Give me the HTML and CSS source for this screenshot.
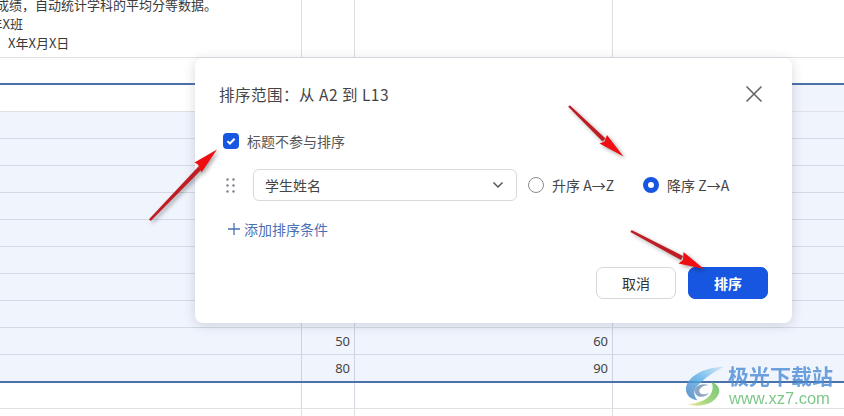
FILE: index.html
```html
<!DOCTYPE html>
<html lang="zh-CN">
<head>
<meta charset="utf-8">
<title>排序</title>
<link rel="stylesheet" href="styles.css">
</head>
<body>
<div class="sheet">
  <div class="row row-intro">
    <div class="cell cell-intro">
      <p class="intro-line intro-a">用于录入学生成绩，自动统计学科的平均分等数据。</p>
      <p class="intro-line intro-b">X年X班</p>
      <p class="intro-line intro-c">时间：X年X月X日</p>
    </div>
    <div class="cell"></div><div class="cell"></div><div class="cell"></div>
  </div>
  <div class="row row-gap"><div class="cell wide"></div></div>
  <div class="row row-head"><div class="cell wide"></div><div class="cell tint-end"></div></div>
  <div class="row band"><div class="cell"></div><div class="cell"></div><div class="cell"></div><div class="cell"></div></div>
  <div class="row band"><div class="cell"></div><div class="cell"></div><div class="cell"></div><div class="cell"></div></div>
  <div class="row band"><div class="cell"></div><div class="cell"></div><div class="cell"></div><div class="cell"></div></div>
  <div class="row band"><div class="cell"></div><div class="cell"></div><div class="cell"></div><div class="cell"></div></div>
  <div class="row band"><div class="cell"></div><div class="cell"></div><div class="cell"></div><div class="cell"></div></div>
  <div class="row band"><div class="cell"></div><div class="cell"></div><div class="cell"></div><div class="cell"></div></div>
  <div class="row band"><div class="cell"></div><div class="cell"></div><div class="cell"></div><div class="cell"></div></div>
  <div class="row band"><div class="cell"></div><div class="cell"></div><div class="cell"></div><div class="cell"></div></div>
  <div class="row band"><div class="cell"></div><div class="cell num">50</div><div class="cell num">60</div><div class="cell"></div></div>
  <div class="row band band-last"><div class="cell"></div><div class="cell num">80</div><div class="cell num">90</div><div class="cell"></div></div>
  <div class="row row-foot"><div class="cell"></div><div class="cell"></div><div class="cell"></div><div class="cell"></div></div>
  <div class="row"><div class="cell"></div><div class="cell"></div><div class="cell"></div><div class="cell"></div></div>
</div>

<section class="dialog">
  <header class="dialog-head">
    <h2 class="dialog-title">排序范围：从 A2 到 L13</h2>
    <svg class="close" width="18" height="18" viewBox="0 0 18 18"><path d="M1.500 1.500l15 15M16.500 1.500l-15 15"/></svg>
  </header>
  <label class="check-row">
    <span class="checkbox"><svg width="16" height="16" viewBox="0 0 16 16"><path d="M4.400 8.100l2.500 2.400 4.700-4.800"/></svg></span>
    <span>标题不参与排序</span>
  </label>
  <div class="rule">
    <svg class="grip" width="9" height="15" viewBox="0 0 9 15"><g><circle cx="1.500" cy="1.500" r="1.200"/><circle cx="7.500" cy="1.500" r="1.200"/><circle cx="1.500" cy="7.500" r="1.200"/><circle cx="7.500" cy="7.500" r="1.200"/><circle cx="1.500" cy="13.500" r="1.200"/><circle cx="7.500" cy="13.500" r="1.200"/></g></svg>
    <div class="select">
      <span>学生姓名</span>
      <svg width="12" height="8" viewBox="0 0 12 8"><path d="M1.500 1.500L6 6l4.500-4.500"/></svg>
    </div>
    <div class="radio-item"><span class="radio"></span><span>升序 A→Z</span></div>
    <div class="radio-item"><span class="radio on"></span><span>降序 Z→A</span></div>
  </div>
  <div class="add">
    <svg width="12" height="12" viewBox="0 0 12 12"><path d="M6 0v12M0 6h12"/></svg>
    <span>添加排序条件</span>
  </div>
  <footer class="actions">
    <button class="btn">取消</button>
    <button class="btn primary">排序</button>
  </footer>
</section>

<svg class="arrows" width="844" height="416" viewBox="0 0 844 416">
  <g class="arrow">
    <path class="shaft" d="M149 219.200L198.400 166.500l3.200 3L150.800 221z"/>
    <path class="head" d="M217 149.500L194.500 162.500l3.500 2 3.500 8z"/>
  </g>
  <g class="arrow">
    <path class="shaft" d="M569.800 105.200L605.500 138.500l-3 3L568.200 106.800z"/>
    <path class="head" d="M623.500 156.500L599.500 143.500l5-2 2.500-6.500z"/>
  </g>
  <g class="arrow">
    <path class="shaft" d="M631.600 230L683 256l-2 4L630.400 232z"/>
    <path class="head" d="M704 269L678.500 263.500l4.500-3.500 .5-8z"/>
  </g>
</svg>

<div class="mark">
  <svg class="mark-logo" width="44" height="44" viewBox="0 0 46 44">
    <defs>
      <linearGradient id="gr" x1="1" y1="0" x2="0" y2="1"><stop offset="0" stop-color="#58b85a"/><stop offset=".6" stop-color="#8ccc62"/><stop offset="1" stop-color="#f0e27a"/></linearGradient>
      <linearGradient id="bl" x1="1" y1="0" x2="0" y2="1"><stop offset="0" stop-color="#cfe6f6"/><stop offset=".5" stop-color="#58aee6"/><stop offset="1" stop-color="#3f78c0"/></linearGradient>
    </defs>
    <path fill="url(#bl)" d="M42 2C24 2 3 11 2 25c0 7 5 11 12 12C9 31 10 25 16 20 22 14 31 7 42 2z"/>
    <path fill="#6f8fb5" d="M26 21c-10-3-17 3-14 9 3 5 11 4 14-1-5 3-10 2-10-2 0-3 5-6 10-6z"/>
    <path fill="url(#gr)" d="M29 18c3 8-1 16-11 20-5 2-10 3-14 3 9 3 23 2 30-7 6-7 2-14-5-16z"/>
  </svg>
  <div class="mark-text">
    <span class="mark-cn">极光下载站</span>
    <span class="mark-url">www.xz7.com</span>
  </div>
</div>
</body>
</html>
```
FILE: styles.css
```css
html, body {
  margin: 0;
  width: 844px;
  height: 416px;
  overflow: hidden;
  background: #fff;
  font-family: "Noto Sans CJK SC", "Liberation Sans", sans-serif;
  color: #333;
}

.sheet { width: 844px; display: flex; flex-direction: column; }

.row {
  display: grid;
  grid-template-columns: 302px 53px 258px 1fr;
  height: 26px;
  border-bottom: 1px solid #dfe1e5;
}
.cell { border-right: 1px solid #dcdee2; min-width: 0; }
.cell:last-child { border-right: 0; }
.wide { grid-column: 1 / 4; border-right: 0; }

.row-intro { height: 57px; }
.cell-intro { overflow: hidden; box-sizing: border-box; height: 57px; }
.intro-line {
  margin: -5px 0 5px;
  height: 19px;
  line-height: 19px;
  font-size: 13px;
  white-space: nowrap;
  color: #3a3a3a;
}
.intro-a { margin-left: -82px; }
.intro-b { margin-left: -18px; }
.intro-c { margin-left: -31px; }

.row-gap { height: 25px; border-bottom: 2px solid #4a72a8; }
.tint-end { background: #f0f4fd; }

.band { background: #f0f4fd; border-bottom-color: #d5d9e3; }
.band .cell { border-right-color: #ccd2e0; }
.band-last { border-bottom: 2px solid #4a72a8; }
.row-foot { height: 25px; }
.row-foot .cell { border-right-color: #d5d8e0; }

.num {
  font-family: "Noto Sans", "Liberation Sans", sans-serif;
  font-size: 13px;
  line-height: 26px;
  text-align: right;
  padding-right: 4px;
  color: #444;
}

.dialog {
  position: absolute;
  left: 195px;
  top: 58px;
  width: 597px;
  height: 265px;
  box-sizing: border-box;
  padding: 0 24px;
  background: #fff;
  border-radius: 8px;
  box-shadow: 0 2px 12px rgba(40, 50, 70, .18);
  display: flex;
  flex-direction: column;
}
.dialog-head {
  display: flex;
  align-items: center;
  justify-content: space-between;
  height: 36px;
  margin-top: 18px;
  padding-right: 5px;
}
.dialog-title { margin: 0; font-size: 15.500px; letter-spacing: .5px; font-weight: 400; color: #444; }
.close path { stroke: #666; stroke-width: 1.6; fill: none; }

.check-row {
  display: flex;
  align-items: center;
  gap: 8px;
  margin-top: 21px;
  margin-left: 4px;
  height: 16px;
  font-size: 14px;
  color: #555;
}
.checkbox {
  width: 16px;
  height: 16px;
  border-radius: 4px;
  background: #1756e0;
  display: flex;
}
.checkbox path { stroke: #fff; stroke-width: 2; fill: none; }

.rule {
  display: flex;
  align-items: center;
  height: 32px;
  margin-top: 20px;
}
.grip { margin-left: 7px; fill: #7b7f87; }
.select {
  width: 264px;
  height: 32px;
  box-sizing: border-box;
  margin-left: 18px;
  padding: 0 12px 0 11px;
  border: 1px solid #d9d9d9;
  border-radius: 6px;
  display: flex;
  align-items: center;
  justify-content: space-between;
  font-size: 14px;
  color: #444;
}
.select path { stroke: #555; stroke-width: 1.5; fill: none; }
.radio-item {
  display: flex;
  align-items: center;
  gap: 8px;
  margin-left: 11px;
  margin-right: 18px;
  font-size: 14px;
  color: #444;
  white-space: nowrap;
}
.radio {
  width: 16px;
  height: 16px;
  box-sizing: border-box;
  border: 1px solid #8a8d93;
  border-radius: 50%;
}
.radio.on { border: 5px solid #1756e0; }

.add {
  display: flex;
  align-items: center;
  gap: 4px;
  margin-top: 19px;
  margin-left: 9px;
  height: 18px;
  font-size: 14px;
  color: #4a70b4;
}
.add path { stroke: #4a70b4; stroke-width: 1.3; fill: none; }

.actions {
  display: flex;
  justify-content: flex-end;
  gap: 12px;
  margin-top: auto;
  margin-bottom: 24px;
}
.btn {
  width: 80px;
  height: 32px;
  border: 1px solid #d5d7da;
  border-radius: 7px;
  background: #fff;
  font-family: inherit;
  font-size: 14px;
  color: #333;
  padding: 0;
}
.btn.primary { background: #1756e0; border-color: #1756e0; color: #fff; font-weight: 700; }

.arrows { position: absolute; left: 0; top: 0; pointer-events: none; }
.arrow { filter: drop-shadow(2px 2px 2px rgba(0, 0, 0, .35)); }
.shaft { fill: #bf1c24; }
.head { fill: #ee0f12; }

.mark {
  position: absolute;
  left: 684px;
  top: 362px;
  display: flex;
  opacity: .8;
}
.mark-logo { margin-top: 2px; }
.mark-text { display: flex; flex-direction: column; }
.mark-cn {
  font-size: 21px;
  line-height: 26px;
  font-weight: 700;
  color: #4a8cd4;
  white-space: nowrap;
}
.mark-url {
  font-family: "Liberation Sans", sans-serif;
  font-size: 16.500px;
  line-height: 20px;
  color: #5cba6c;
  margin-left: 1px;
  white-space: nowrap;
}
```
